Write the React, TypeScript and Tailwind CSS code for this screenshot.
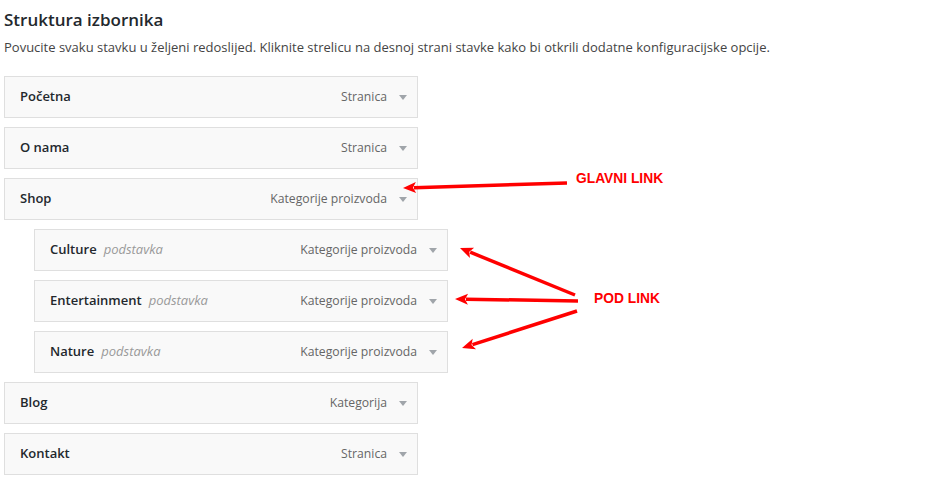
import React from "react";

type Item = {
  title: string;
  type: string;
  sub?: boolean;
};

const items: Item[] = [
  { title: "Početna", type: "Stranica" },
  { title: "O nama", type: "Stranica" },
  { title: "Shop", type: "Kategorije proizvoda" },
  { title: "Culture", type: "Kategorije proizvoda", sub: true },
  { title: "Entertainment", type: "Kategorije proizvoda", sub: true },
  { title: "Nature", type: "Kategorije proizvoda", sub: true },
  { title: "Blog", type: "Kategorija" },
  { title: "Kontakt", type: "Stranica" },
];

const MenuItem = ({ item }: { item: Item }) => (
  <div
    className={`flex h-[42px] w-[414px] items-center justify-between border border-[#dfdfdf] bg-[#f9f9f9] pl-[15px] pr-[10px] ${
      item.sub ? "ml-[30px]" : ""
    }`}
  >
    <div className="flex items-baseline gap-[7px]">
      <span className="text-[13px] font-semibold text-[#23282d]">{item.title}</span>
      {item.sub && <span className="text-[13px] italic text-[#999]">podstavka</span>}
    </div>
    <div className="flex items-center gap-[12px]">
      <span className="text-[12.2px] text-[#666]">{item.type}</span>
      <svg width="8" height="5" viewBox="0 0 8 5" className="mt-[1px]">
        <path d="M0 0 L8 0 L4 5 Z" fill="#a0a5aa" />
      </svg>
    </div>
  </div>
);

const Arrow = ({ x1, y1, x2, y2 }: { x1: number; y1: number; x2: number; y2: number }) => {
  // arrow from tail (x1,y1) to tip (x2,y2)
  const dx = x2 - x1;
  const dy = y2 - y1;
  const len = Math.sqrt(dx * dx + dy * dy);
  const ux = dx / len;
  const uy = dy / len;
  const headLen = 13;
  const headW = 5.5;
  const bx = x2 - ux * headLen;
  const by = y2 - uy * headLen;
  const px = -uy;
  const py = ux;
  return (
    <g>
      <line x1={x1} y1={y1} x2={bx + ux * 2} y2={by + uy * 2} stroke="#f00" strokeWidth="3.5" />
      <polygon
        points={`${x2},${y2} ${bx + px * headW},${by + py * headW} ${bx + ux * 3},${by + uy * 3} ${bx - px * headW},${by - py * headW}`}
        fill="#f00"
      />
    </g>
  );
};

export default function App() {
  return (
    <div className="relative h-[496px] w-[940px] overflow-hidden bg-white font-['Open_Sans',sans-serif]">
      <div className="flex flex-col px-[4px] pt-[8px]">
        <h2 className="text-[17px] font-semibold leading-[24px] text-[#23282d]">Struktura izbornika</h2>
        <p className="mt-[4px] text-[13px] leading-[22px] text-[#444]">
          Povucite svaku stavku u željeni redoslijed. Kliknite strelicu na desnoj strani stavke kako bi otkrili dodatne konfiguracijske opcije.
        </p>
        <div className="mt-[18px] flex flex-col gap-[9px]">
          {items.map((item) => (
            <MenuItem key={item.title} item={item} />
          ))}
        </div>
      </div>

      {/* annotations */}
      <svg className="absolute left-0 top-0" width="940" height="496" viewBox="0 0 940 496">
        <Arrow x1={567} y1={183} x2={403} y2={188} />
        <Arrow x1={575} y1={295} x2={460} y2={248} />
        <Arrow x1={578} y1={301} x2={455} y2={299} />
        <Arrow x1={577} y1={311} x2={462} y2={348} />
      </svg>
      <span className="absolute left-[576px] top-[171px] font-['Liberation_Sans',Arial,sans-serif] text-[13.8px] font-bold leading-[16px] text-[#f00]">
        GLAVNI LINK
      </span>
      <span className="absolute left-[594px] top-[291px] font-['Liberation_Sans',Arial,sans-serif] text-[13.8px] font-bold leading-[16px] text-[#f00]">
        POD LINK
      </span>
    </div>
  );
}
